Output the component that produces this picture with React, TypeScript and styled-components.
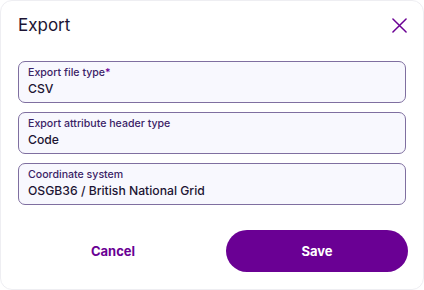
import styled, { createGlobalStyle } from "styled-components";

const GlobalStyle = createGlobalStyle`
  html, body {
    margin: 0;
    padding: 0;
    background: #ffffff;
  }
  body {
    font-family: Inter, "Noto Sans", sans-serif;
  }
`;

const Dialog = styled.div`
  width: 424px;
  height: 290px;
  box-sizing: border-box;
  background: #fff;
  border: 1px solid #eeeef2;
  border-radius: 12px;
  display: flex;
  flex-direction: column;
  padding: 12px 15px 0 17px;
`;

const Header = styled.div`
  display: flex;
  align-items: center;
  justify-content: space-between;
  height: 24px;
`;

const Title = styled.h1`
  margin: 0;
  font-size: 17px;
  font-weight: 400;
  color: #1c1433;
`;

const CloseButton = styled.button`
  border: 0;
  background: none;
  padding: 0;
  width: 16px;
  height: 16px;
  display: flex;
  align-items: center;
  justify-content: center;
  cursor: pointer;
  margin-right: 1px;
`;

const Fields = styled.div`
  display: flex;
  flex-direction: column;
  gap: 9px;
  margin-top: 24px;
  padding-right: 2px;
`;

const Field = styled.div`
  height: 42px;
  box-sizing: border-box;
  border: 1px solid #7f6fa0;
  border-radius: 7px;
  background: #f8f8fe;
  padding: 3px 9px 0;
  display: flex;
  flex-direction: column;
`;

const Label = styled.span`
  font-size: 10.6px;
  font-weight: 500;
  color: #3b2366;
  line-height: 15px;
`;

const Required = styled.span`
  color: #6a0094;
`;

const Value = styled.span`
  font-size: 12.2px;
  font-weight: 500;
  color: #1c1433;
  line-height: 18px;
`;

const Actions = styled.div`
  display: flex;
  align-items: center;
  margin-top: 25px;
`;

const Button = styled.button<{ $primary?: boolean }>`
  flex: ${(p) => (p.$primary ? "0 0 182px" : "1")};
  margin-right: ${(p) => (p.$primary ? "0" : "18px")};
  height: 42px;
  border: 0;
  border-radius: 21px;
  font-family: Inter, "Noto Sans", sans-serif;
  font-size: 13px;
  font-weight: 700;
  cursor: pointer;
  background: ${(p) => (p.$primary ? "#6a0094" : "transparent")};
  color: ${(p) => (p.$primary ? "#ffffff" : "#6a0094")};
`;

export default function App() {
  return (
    <>
      <GlobalStyle />
      <Dialog>
        <Header>
          <Title>Export</Title>
          <CloseButton aria-label="Close">
            <svg width="15" height="15" viewBox="0 0 16 16">
              <path d="M1 1 L15 15 M15 1 L1 15" stroke="#6a0094" strokeWidth="1.6" strokeLinecap="round" />
            </svg>
          </CloseButton>
        </Header>
        <Fields>
          <Field>
            <Label>
              Export file type<Required>*</Required>
            </Label>
            <Value>CSV</Value>
          </Field>
          <Field>
            <Label>Export attribute header type</Label>
            <Value>Code</Value>
          </Field>
          <Field>
            <Label>Coordinate system</Label>
            <Value>OSGB36 / British National Grid</Value>
          </Field>
        </Fields>
        <Actions>
          <Button>Cancel</Button>
          <Button $primary>Save</Button>
        </Actions>
      </Dialog>
    </>
  );
}
